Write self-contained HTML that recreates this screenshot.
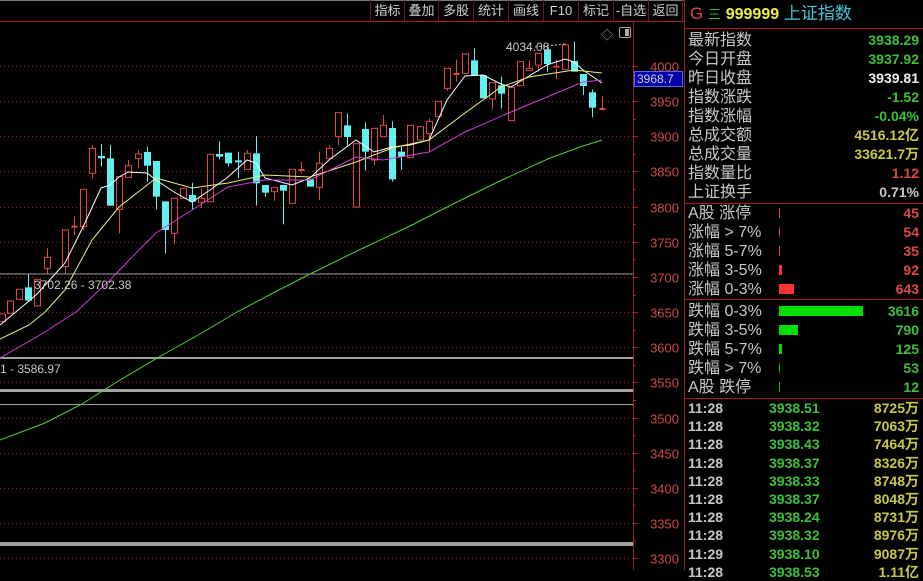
<!DOCTYPE html>
<html><head><meta charset="utf-8">
<style>
*{margin:0;padding:0;box-sizing:border-box}
body{width:923px;height:570px;background:#000;overflow:hidden;position:relative;font-family:"Liberation Sans","Noto Sans CJK SC",sans-serif;color:#c8c8c8}
.tb{position:absolute;top:0;height:21px;font-size:13px;color:#d0d0d0;line-height:21px;text-align:center;border-left:1px solid #6a1a1a}
.p{position:absolute;left:684px;width:239px;font-size:14px}
.r{position:absolute;left:688px;right:4px;height:19px;line-height:19px;font-size:16px}
.r .l{position:absolute;left:0}
.r .v{position:absolute;right:0;font-weight:bold;font-size:14px}
.sep{position:absolute;left:684px;width:239px;height:1px;background:#a02020}
.bar{position:absolute;height:10px}
.t{position:absolute;left:688px;right:4px;height:18px;line-height:18px;font-size:14px;font-weight:bold}
.t span{position:absolute}
</style></head><body>
<div style="position:absolute;left:0;top:0;width:684px;height:1px;background:#777"></div>
<div style="position:absolute;left:0;top:21px;width:684px;height:1px;background:#a02020"></div>
<div class="tb" style="left:370px;width:34px">指标</div>
<div class="tb" style="left:404px;width:34px">叠加</div>
<div class="tb" style="left:438px;width:35px">多股</div>
<div class="tb" style="left:473px;width:35px">统计</div>
<div class="tb" style="left:508px;width:35px">画线</div>
<div class="tb" style="left:543px;width:35px">F10</div>
<div class="tb" style="left:578px;width:35px">标记</div>
<div class="tb" style="left:613px;width:35px">-自选</div>
<div class="tb" style="left:648px;width:35px;border-right:1px solid #6a1a1a">返回</div>

<svg id="ch" width="684" height="570" style="position:absolute;left:0;top:0"></svg>

<div style="position:absolute;left:634px;top:71px;width:49px;height:16px;background:#0000a8;border:1px solid #6060ff;color:#d0d0d0;font-size:12px;line-height:14px;padding-left:2px">3968.7</div>
<div style="position:absolute;left:34px;top:278px;font-size:12px;color:#c8c8c8">3702.26 - 3702.38</div>
<div style="position:absolute;left:0;top:362px;font-size:12px;color:#c8c8c8">1 - 3586.97</div>
<div style="position:absolute;left:506px;top:40px;font-size:12px;color:#c8c8c8">4034.08</div>
<div style="position:absolute;left:601px;top:26px;font-size:12px;color:#aaa">◇</div>
<div style="position:absolute;left:619px;top:27px;width:12px;height:11px;border:1px solid #aaa;border-radius:2px"><div style="position:absolute;right:1px;top:1px;width:4px;height:7px;background:#aaa"></div></div>

<div style="position:absolute;left:684px;top:0;width:1px;height:570px;background:#a02020"></div>
<div class="p" style="top:3px;height:22px;padding-left:6px;font-size:17px;line-height:22px"><span style="color:#e04848">G</span> <span style="color:#3cb43c;font-size:13px">三</span> <span style="color:#f0f040;font-weight:bold;font-size:16px">999999</span> <span style="color:#40c8d8">上证指数</span></div>
<div class="sep" style="top:28px"></div>

<div class="r" style="top:31px"><span class="l">最新指数</span><span class="v" style="color:#3cc03c">3938.29</span></div>
<div class="r" style="top:50px"><span class="l">今日开盘</span><span class="v" style="color:#3cc03c">3937.92</span></div>
<div class="r" style="top:69px"><span class="l">昨日收盘</span><span class="v" style="color:#f0f0f0">3939.81</span></div>
<div class="r" style="top:88px"><span class="l">指数涨跌</span><span class="v" style="color:#3cc03c">-1.52</span></div>
<div class="r" style="top:107px"><span class="l">指数涨幅</span><span class="v" style="color:#3cc03c">-0.04%</span></div>
<div class="r" style="top:126px"><span class="l">总成交额</span><span class="v" style="color:#c8c848">4516.12亿</span></div>
<div class="r" style="top:145px"><span class="l">总成交量</span><span class="v" style="color:#c8c848">33621.7万</span></div>
<div class="r" style="top:164px"><span class="l">指数量比</span><span class="v" style="color:#e04848">1.12</span></div>
<div class="r" style="top:183px"><span class="l">上证换手</span><span class="v" style="color:#c8c8c8">0.71%</span></div>
<div class="sep" style="top:203px"></div>

<div class="r" style="top:204px"><span class="l">A股 涨停</span><span class="v" style="color:#e04848">45</span></div>
<div class="r" style="top:223px"><span class="l">涨幅 &gt; 7%</span><span class="v" style="color:#e04848">54</span></div>
<div class="r" style="top:242px"><span class="l">涨幅 5-7%</span><span class="v" style="color:#e04848">35</span></div>
<div class="r" style="top:261px"><span class="l">涨幅 3-5%</span><span class="v" style="color:#e04848">92</span></div>
<div class="r" style="top:280px"><span class="l">涨幅 0-3%</span><span class="v" style="color:#e04848">643</span></div>
<div class="bar" style="left:779px;top:208px;width:1px;background:#e04040"></div>
<div class="bar" style="left:779px;top:227px;width:1px;background:#e04040"></div>
<div class="bar" style="left:779px;top:246px;width:1px;background:#e04040"></div>
<div class="bar" style="left:779px;top:265px;width:3px;background:#ff3030"></div>
<div class="bar" style="left:779px;top:284px;width:15px;background:#ff3030"></div>
<div class="sep" style="top:299px"></div>
<div class="r" style="top:302px"><span class="l">跌幅 0-3%</span><span class="v" style="color:#3cc03c">3616</span></div>
<div class="r" style="top:321px"><span class="l">跌幅 3-5%</span><span class="v" style="color:#3cc03c">790</span></div>
<div class="r" style="top:340px"><span class="l">跌幅 5-7%</span><span class="v" style="color:#3cc03c">125</span></div>
<div class="r" style="top:359px"><span class="l">跌幅 &gt; 7%</span><span class="v" style="color:#3cc03c">53</span></div>
<div class="r" style="top:378px"><span class="l">A股 跌停</span><span class="v" style="color:#3cc03c">12</span></div>
<div class="bar" style="left:779px;top:306px;width:84px;background:#00e000"></div>
<div class="bar" style="left:779px;top:325px;width:19px;background:#00e000"></div>
<div class="bar" style="left:779px;top:344px;width:3px;background:#00e000"></div>
<div class="bar" style="left:779px;top:363px;width:1px;background:#00c000"></div>
<div class="bar" style="left:779px;top:382px;width:1px;background:#00c000"></div>
<div class="sep" style="top:398px"></div>

<div id="trades"></div>

<script>
var s='';
function L(x1,y1,x2,y2,c,w,d){s+='<line x1="'+x1+'" y1="'+y1+'" x2="'+x2+'" y2="'+y2+'" stroke="'+c+'" stroke-width="'+(w||1)+'"'+(d?' stroke-dasharray="'+d+'"':'')+'/>';}
var labels=[4000,3950,3900,3850,3800,3750,3700,3650,3600,3550,3500,3450,3400,3350,3300];
for(var i=0;i<15;i++){var y=Math.round(66+i*35.15)+0.5;L(0,y,633,y,'#8a2020',1,'1 3');L(633,y,638,y,'#a02020');
 var hy=Math.round(66+i*35.15+17.6)+0.5;L(633,hy,636,hy,'#a02020');
 s+='<text x="679" y="'+(y+5)+'" fill="#d04848" font-size="13" text-anchor="end" font-family="Liberation Sans">'+labels[i]+'</text>';}
L(633.5,22,633.5,570,'#a02020');
L(0,274,633,274,'#a0a0a0',1);
L(0,358,633,358,'#a0a0a0',2);
L(0,390.5,633,390.5,'#a0a0a0',3);
L(0,404.5,633,404.5,'#a0a0a0',1);
L(0,544,633,544,'#a0a0a0',4);
var C=[[5,'r',252,275,252,275,1],[30,'r',213,250,213,250,1],[58,'r',178,208,178,208,1],[85,'c',172,212,132,212,1],[112,'r',148,228,148,228,1],[142,'r',82,115,55,130,1]];
var D=[[160,'r',690,800,690,820],[182,'r',680,684,650,705],[204,'r',568,680,568,690],[226,'r',445,520,435,535],[248,'c',468,475,432,500],[270,'c',475,617,435,617],[292,'r',530,628,530,700],[314,'r',497,532,480,532],[338,'r',462,476,450,505],[361,'c',456,497,440,545],[383,'c',483,590,483,628],[405,'c',604,690,604,760],[427,'r',595,700,595,732],[449,'r',565,595,565,595],[471,'c',585,605,548,630],[493,'r',595,607,565,625],[515,'r',463,605,463,605],[537,'c',462,470,424,478],[559,'c',458,490,458,500],[584,'c',481,487,455,535],[606,'r',460,508,450,508],[628,'c',460,550,408,617],[650,'c',555,578,555,590],[672,'r',562,575,562,602],[694,'c',555,572,555,673],[716,'r',508,610,508,610],[738,'r',510,515,485,520],[760,'c',538,560,538,560],[782,'r',490,562,455,600],[806,'r',445,475,435,475],[829,'r',338,410,338,436],[851,'c',376,411,340,436],[873,'r',431,621,431,621],[895,'c',387,455,367,512],[917,'r',385,480,385,497],[939,'r',376,410,345,410],[961,'c',384,538,364,545],[983,'c',455,470,440,510],[1005,'r',376,473,376,473],[1029,'r',380,420,380,420],[1051,'r',364,400,355,455],[1074,'r',304,350,304,350],[1096,'r',205,265,205,272],[1118,'r',222,226,178,245],[1140,'r',162,220,162,220],[1162,'c',181,225,145,225],[1184,'c',226,295,226,295],[1206,'r',248,297,248,328],[1228,'c',256,281,230,326],[1252,'r',262,362,262,362],[1274,'r',185,257,185,257],[1296,'r',205,212,180,212],[1318,'r',160,195,160,215],[1340,'c',148,192,140,215],[1362,'r',200,205,178,238],[1384,'r',135,208,130,208],[1406,'c',183,215,125,215],[1429,'c',222,258,222,285],[1451,'c',277,323,268,352],[1475,'r',327,330,289,332]];
function cand(x,c,b1,b2,w1,w2){x=Math.round(x)+0.5;
 if(c=='r'){L(x,w1,x,b1,'#e04848');L(x,b2,x,w2,'#e04848');
  if(b2-b1<2){L(x-3,b1,x+3,b1,'#e04848',2);}else s+='<rect x="'+(x-3)+'" y="'+b1+'" width="6" height="'+(b2-b1)+'" fill="none" stroke="#e04848"/>';}
 else{L(x,w1,x,w2,'#60f0f0');if(b2-b1<2)L(x-3.5,b1,x+3.5,b1,'#60f0f0',2);else s+='<rect x="'+(x-3.5)+'" y="'+b1+'" width="7" height="'+(b2-b1)+'" fill="#60f0f0"/>';}}
C.forEach(function(a){cand(a[0]/3,a[1],230+a[2]/3,230+a[3]/3,230+a[4]/3,230+a[5]/3);});
D.forEach(function(a){cand(a[0]/2.45,a[1],a[2]/3,a[3]/3,a[4]/3,a[5]/3);});
function P(pts,c){s+='<polyline fill="none" stroke="'+c+'" stroke-width="1" points="'+pts+'"/>';}
P('0,325 29,301 38,293 65,263 83,227 101,188 110,185 119,177 128,172 147,173 156,180 174,192 192,202 210,190 228,177 247,160 256,163 265,178 292,185 310,178 329,160 356,140 374,152 392,147 410,145 429,140 447,100 465,76 483,75 501,84 511,87 529,76 547,65 565,59 574,62 583,70 602,83','#ffffff');
P('0,339 29,325 45,312 65,290 92,240 119,207 156,178 192,188 228,183 265,175 310,177 356,162 392,148 429,140 465,113 501,87 529,77 574,70 602,73','#f0f080');
P('0,358 40,335 76,312 110,280 139,250 156,233 192,210 228,187 265,180 310,180 356,157 383,160 429,152 465,132 511,112 547,97 583,82 602,80','#d040d0');
P('0,440 45,423 82,404 120,380 159,357 200,334 237,312 275,292 310,274 359,250 408,227 455,203 502,180 550,158 580,147 602,140','#50d030');
L(535,47,566,44,'#c8c8c8',1,'2 2');
document.getElementById('ch').innerHTML=s;
var T=[['11:28','3938.51','8725万'],['11:28','3938.32','7063万'],['11:28','3938.43','7464万'],['11:28','3938.37','8326万'],['11:28','3938.33','8748万'],['11:28','3938.37','8048万'],['11:28','3938.24','8731万'],['11:28','3938.32','8976万'],['11:29','3938.10','9087万'],['11:28','3938.53','1.11亿']];
var h='';T.forEach(function(r,i){var y=399+i*18.2;h+='<div class="t" style="top:'+y+'px"><span style="left:0;color:#c8c8c8">'+r[0]+'</span><span style="left:81px;color:#3cc03c">'+r[1]+'</span><span style="right:0;color:#c8c848">'+r[2]+'</span></div>';});
document.getElementById('trades').innerHTML=h;
</script>
</body></html>
